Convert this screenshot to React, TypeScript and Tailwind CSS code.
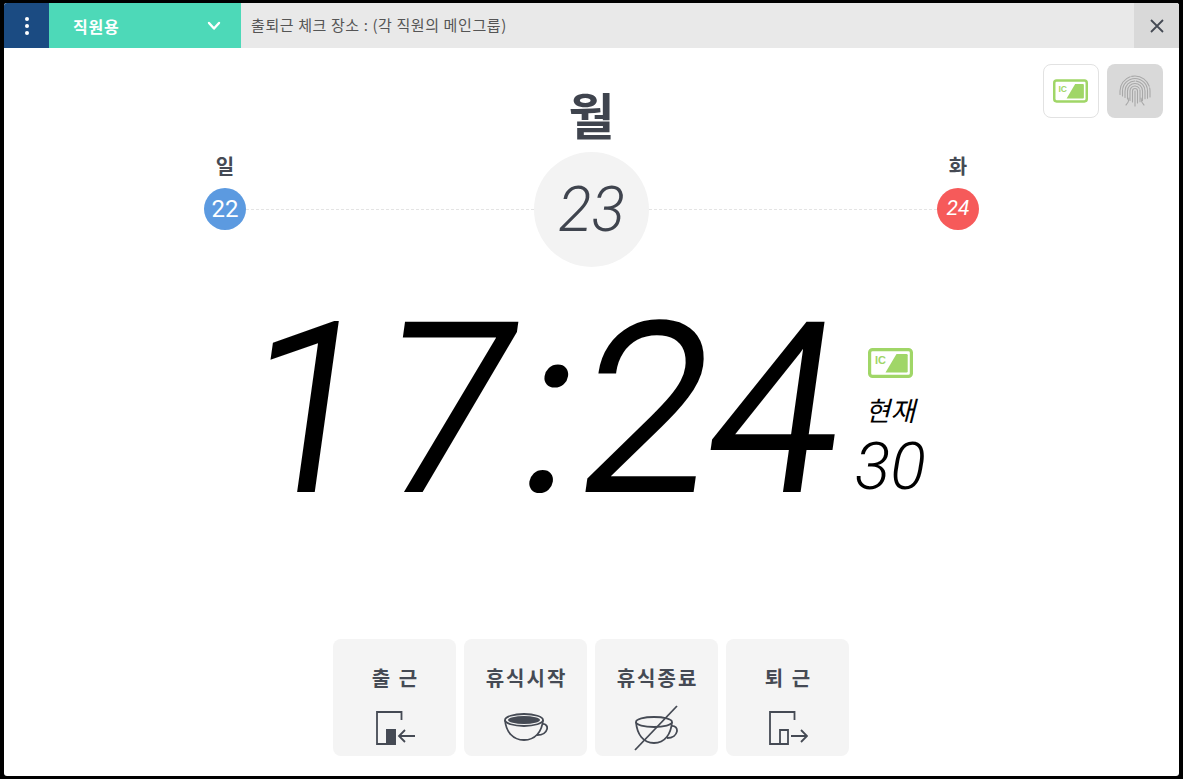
import React from "react";

const kr = "font-['Noto_Sans_CJK_KR','Noto_Sans',sans-serif]";
const num = "font-['Roboto',sans-serif]";

function IcIcon({ w, h }: { w: number; h: number }) {
  return (
    <svg width={w} height={h} viewBox="0 0 45 30" fill="none">
      <rect x="1.6" y="1.6" width="41.8" height="26.8" rx="3" stroke="#a0d667" strokeWidth="3.2" />
      <path d="M17.5 24.5 L28.5 6 H38.5 a1.2 1.2 0 0 1 1.2 1.2 V23.3 a1.2 1.2 0 0 1 -1.2 1.2 Z" fill="#a0d667" />
      <text x="7" y="16" fontSize="11" fontWeight="700" fill="#a0d667" fontFamily="Liberation Sans, sans-serif">IC</text>
    </svg>
  );
}

function Fingerprint() {
  const radii = [2.5, 5, 7.5, 10, 12.5, 15];
  return (
    <svg width="34" height="34" viewBox="0 0 34 34" fill="none" stroke="#a8a8a8" strokeWidth="1.1" strokeLinecap="round">
      {radii.map((r, i) => (
        <path key={r} d={`M${17 - r} ${28 - i * 1.5} V17 a${r} ${r} 0 0 1 ${2 * r} 0 V${29 - i * 1.2}`} strokeDasharray={i % 2 ? "22 1.5" : undefined} />
      ))}
      <path d="M17 17 V32" />
      <path d="M8 31 q3 -3 3 -7 M26 31 q-3 -3 -3 -7" />
    </svg>
  );
}

function DoorIn() {
  return (
    <svg width="40" height="36" viewBox="0 0 40 36" fill="none" stroke="#454a54" strokeWidth="1.8">
      <path d="M26.5 10 V2 H2 V34 H20 V20 H12 V34" />
      <rect x="12" y="20" width="8" height="14" fill="#454a54" />
      <path d="M40 26 H24 M30 20 L24 26 L30 32" />
    </svg>
  );
}

function DoorOut() {
  return (
    <svg width="40" height="36" viewBox="0 0 40 36" fill="none" stroke="#454a54" strokeWidth="1.8">
      <path d="M26.5 10 V2 H2 V34 H20 V20 H12 V34" />
      <path d="M23 26 H39 M33 20 L39 26 L33 32" />
    </svg>
  );
}

function Cup() {
  return (
    <svg width="44" height="30" viewBox="0 0 44 30" fill="none" stroke="#454a54" strokeWidth="1.8" className="mb-[4px]">
      <ellipse cx="20" cy="8" rx="19" ry="6" />
      <ellipse cx="20" cy="8" rx="16" ry="4" fill="#454a54" stroke="none" />
      <path d="M1 8 C2 20 9 28 20 28 C31 28 38 20 39 8" />
      <path d="M38 12 C46 11 45 23 33 23" />
    </svg>
  );
}

function CupOff() {
  return (
    <svg width="44" height="46" viewBox="0 0 44 46" fill="none" stroke="#454a54" strokeWidth="1.8" className="mb-[-5px] ml-[-1px]">
      <ellipse cx="20" cy="17" rx="18" ry="5" />
      <path d="M2 17 C3 29 9 38 20 38 C31 38 37 29 38 17" />
      <path d="M37 21 C46 20 45 33 33 33" />
      <path d="M43 1 L1 45" />
    </svg>
  );
}

function ActionButton({ label, children }: { label: string; children: React.ReactNode }) {
  return (
    <div className="w-[123px] h-[117px] rounded-lg bg-[#f4f4f4] flex flex-col items-center">
      <div className={`mt-[25px] ml-[2px] h-[28px] text-[20px] leading-[28px] font-bold tracking-[2px] text-[#454a54] ${kr}`}>{label}</div>
      <div className="flex-1 flex items-end justify-center pb-[10px]">{children}</div>
    </div>
  );
}

export default function App() {
  return (
    <div className="w-[1183px] h-[779px] bg-black pt-[3px] pl-[4px] pr-[4px] pb-[3px] overflow-hidden">
      <div className="relative w-full h-full bg-white rounded-[3px] flex flex-col overflow-hidden">
        <div className="flex h-[45px] bg-[#e9e9e9] shrink-0">
          <div className="w-[45px] bg-[#1b4b82] flex flex-col items-center justify-center gap-[3px]">
            <span className="w-[4px] h-[4px] rounded-full bg-white" />
            <span className="w-[4px] h-[4px] rounded-full bg-white" />
            <span className="w-[4px] h-[4px] rounded-full bg-white" />
          </div>
          <div className="w-[192px] bg-[#4dd9b8] flex items-center justify-between pl-[24px] pr-[20px]">
            <span className={`text-[16px] font-bold tracking-[0.8px] text-white ${kr}`}>직원용</span>
            <svg width="14" height="10" viewBox="0 0 14 10" fill="none" stroke="#fff" strokeWidth="2.4" strokeLinecap="round" strokeLinejoin="round">
              <path d="M2 2 L7 7.5 L12 2" />
            </svg>
          </div>
          <div className={`flex-1 flex items-center pl-[10px] text-[15px] tracking-[0.6px] text-[#555] ${kr}`}>
            출퇴근 체크 장소 : (각 직원의 메인그룹)
          </div>
          <div className="w-[45px] bg-[#d9d9d9] flex items-center justify-center">
            <svg width="14" height="14" viewBox="0 0 14 14" fill="none" stroke="#454a54" strokeWidth="1.8">
              <path d="M1 1 L13 13 M13 1 L1 13" />
            </svg>
          </div>
        </div>

        <div className="absolute top-[61px] right-[16px] flex gap-[8px]">
          <div className="w-[56px] h-[54px] rounded-lg border border-[#e2e2e2] bg-white flex items-center justify-center pr-[1px]">
            <IcIcon w={35} h={24} />
          </div>
          <div className="w-[56px] h-[54px] rounded-lg bg-[#d9d9d9] flex items-center justify-center">
            <Fingerprint />
          </div>
        </div>

        <div className="flex flex-col items-center mt-[26px]">
          <div className={`h-[78px] text-[50px] leading-[78px] font-bold text-[#3f444e] ${kr}`}>월</div>
          <div className="w-[775px] flex items-end">
            <div className="flex flex-col items-center w-[42px] mb-[37px]">
              <div className={`text-[20px] leading-[28px] font-bold text-[#454a54] mb-[8px] ${kr}`}>일</div>
              <div className={`w-[42px] h-[42px] rounded-full bg-[#5c9ae0] text-white flex items-center justify-center text-[24px] font-normal ${num}`}>22</div>
            </div>
            <div className="flex-1 mb-[57px] border-t border-dashed border-[#e4e4e4]" />
            <div className={`w-[115px] h-[115px] rounded-full bg-[#f3f3f3] flex items-center justify-center text-[62px] font-light italic text-[#3f444e] ${num}`}>23</div>
            <div className="flex-1 mb-[57px] border-t border-dashed border-[#e4e4e4]" />
            <div className="flex flex-col items-center w-[42px] mb-[37px]">
              <div className={`text-[20px] leading-[28px] font-bold text-[#454a54] mb-[8px] ${kr}`}>화</div>
              <div className={`w-[42px] h-[42px] rounded-full bg-[#f65a5a] text-white flex items-center justify-center text-[21px] font-normal italic ${num}`}>24</div>
            </div>
          </div>
        </div>

        <div className="flex items-center justify-center mt-[23px] mr-[12px]">
          <div className={`text-[234px] leading-[240px] font-light text-black ${num} -skew-x-[8deg] [-webkit-text-stroke:4px_black] whitespace-nowrap`}>
            <span className="tracking-[11px]">1</span>
            <span className="tracking-[11.5px]">7</span>
            <span className="tracking-[7px]">:</span>
            <span className="tracking-[-2.5px]">2</span>
            <span className="tracking-[-14px]">4</span>
          </div>
          <div className="flex flex-col items-center ml-[28px] mt-[28px]">
            <IcIcon w={45} h={30} />
            <div className={`mt-[14px] text-[27px] leading-[36px] italic font-normal text-black ${kr}`}>현재</div>
            <div className={`mt-[6px] text-[66px] leading-[66px] italic font-light text-black ${num}`}>30</div>
          </div>
        </div>

        <div className="mt-auto mb-[20px] mr-[1px] flex justify-center gap-[8px]">
          <ActionButton label="출 근"><DoorIn /></ActionButton>
          <ActionButton label="휴식시작"><Cup /></ActionButton>
          <ActionButton label="휴식종료"><CupOff /></ActionButton>
          <ActionButton label="퇴 근"><DoorOut /></ActionButton>
        </div>
      </div>
    </div>
  );
}
